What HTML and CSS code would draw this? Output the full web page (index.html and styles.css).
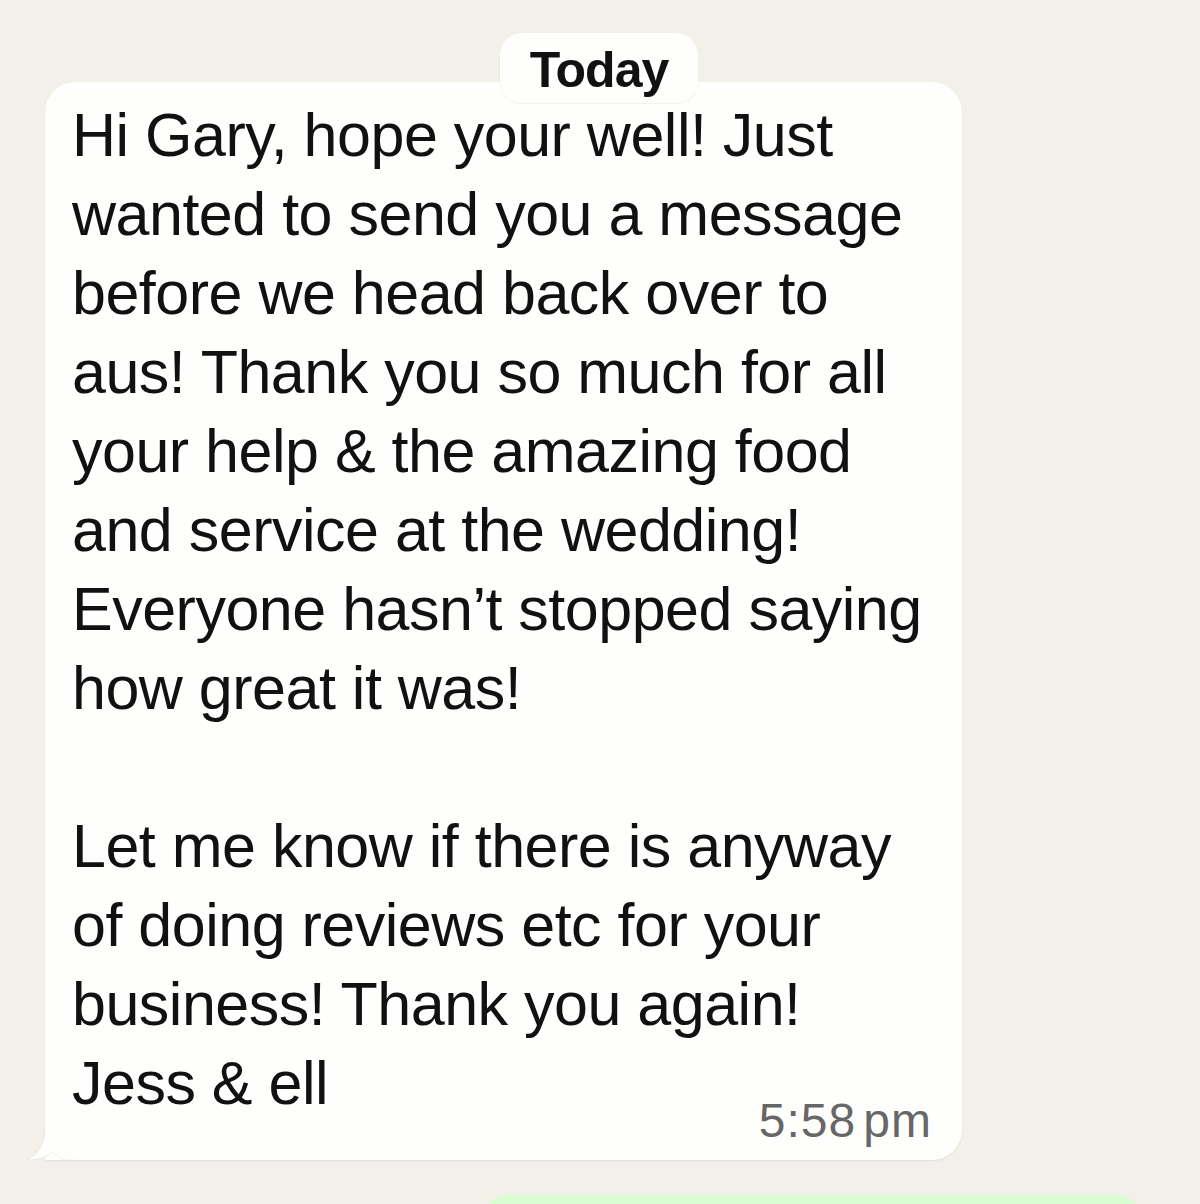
FILE: index.html
```html
<!DOCTYPE html>
<html>
<head>
<meta charset="utf-8">
<link rel="stylesheet" href="styles.css">
</head>
<body>
<div class="chat">
  <div class="day-pill">Today</div>
  <div class="bubble">
    <svg class="tail" width="50" height="45" viewBox="0 0 50 45"><path d="M18 0 L18 16 C18 30 10 40 0 45 C10 45 20 42 26 37 C30 41 35 45 41 45 L50 45 L50 0 Z" fill="#fefefd"/><path d="M18 16 C18 30 10 40 0 45 C10 45 20 42 26 37 C30 41 35 45 41 45 L50 45" fill="none" stroke="rgba(0,0,0,0.05)" stroke-width="1"/></svg>
    <div class="msg">Hi Gary, hope your well! Just<br>wanted to send you a message<br>before we head back over to<br>aus! Thank you so much for all<br>your help &amp; the amazing food<br>and service at the wedding!<br>Everyone hasn’t stopped saying<br>how great it was!<br><br>Let me know if there is anyway<br>of doing reviews etc for your<br>business! Thank you again!<br>Jess &amp; ell</div>
    <div class="time">5:58<span class="thin"> </span>pm</div>
  </div>
  <div class="out"></div>
</div>
</body>
</html>
```

FILE: styles.css
```css
html, body {
  margin: 0;
  padding: 0;
  background: #f3f0e9;
  overflow: hidden;
}
.chat {
  position: relative;
  height: 1204px;
  overflow: hidden;
  padding-top: 82px;
  box-sizing: border-box;
}
.day-pill {
  position: absolute;
  top: 33px;
  left: 500px;
  width: 198px;
  height: 70px;
  box-sizing: border-box;
  background: #fefefd;
  border-radius: 22px;
  box-shadow: 0 1px 2px rgba(0,0,0,0.06);
  z-index: 2;
  font-family: "Liberation Sans", Arial, sans-serif;
  font-weight: bold;
  font-size: 50px;
  letter-spacing: -1px;
  color: #111;
  text-align: center;
  line-height: 74px;
}
.bubble {
  position: relative;
  margin-left: 45px;
  width: 917px;
  height: 1078px;
  box-sizing: border-box;
  padding: 14px 30px 0 27px;
  background: #fefefd;
  border-radius: 30px 30px 30px 0;
  box-shadow: 0 1px 2px rgba(0,0,0,0.07);
}
.tail {
  position: absolute;
  left: -18px;
  bottom: 0;
}
.msg {
  font-family: "Liberation Sans", Arial, sans-serif;
  font-size: 61px;
  line-height: 79px;
  letter-spacing: -0.5px;
  color: #111;
  white-space: nowrap;
}
.time {
  margin-top: -27px;
  text-align: right;
  font-family: "Liberation Sans", Arial, sans-serif;
  font-size: 48px;
  line-height: 50px;
  letter-spacing: 1px;
  color: #676767;
}
.thin { font-size: 22px; }
.out {
  margin-top: 35px;
  margin-left: 480px;
  width: 665px;
  height: 120px;
  background: #d9fdd3;
  border-radius: 30px;
}
```
